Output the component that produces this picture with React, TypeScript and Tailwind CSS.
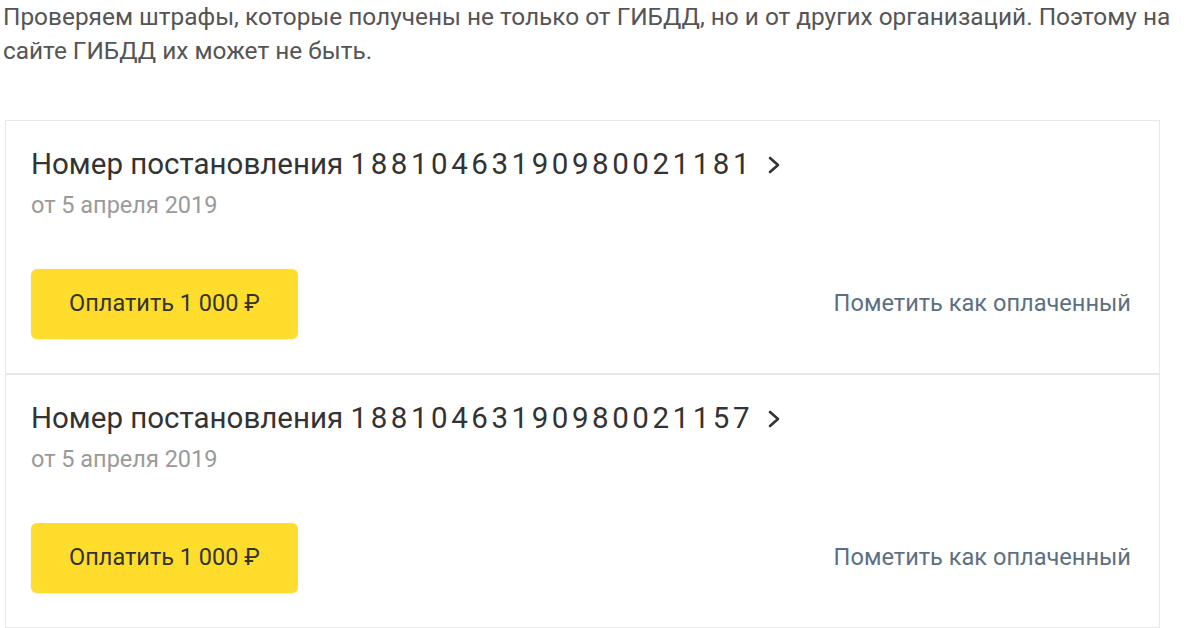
import React from "react";

function Chevron() {
  return (
    <svg width="16" height="20" viewBox="0 0 16 20" className="ml-[13px] mt-[2px]" fill="none">
      <polyline points="4,3 12,10 4,17" stroke="#333" strokeWidth="2.6" strokeLinecap="round" strokeLinejoin="round" />
    </svg>
  );
}

function Fine({ num, last }: { num: string; last?: boolean }) {
  return (
    <div className={`pl-[25px] pr-[28px] pt-[23px] pb-[34px] ${last ? "" : "border-b-2 border-[#e6e6e6]"}`}>
      <div className="flex items-center h-[40px] text-[29.5px] text-[#333] leading-[40px]">
        <span>
          Номер постановления <span className="tracking-[3.55px]">{num}</span>
        </span>
        <Chevron />
      </div>
      <div className="mt-[7px] text-[23.5px] leading-[28px] text-[#9a9a9a]">от 5 апреля 2019</div>
      <div className="mt-[50px] flex items-center justify-between">
        <button className="w-[267px] h-[70px] rounded-[6px] bg-[#ffdd2d] text-[23.5px] text-[#333] shadow-[0_1px_2px_rgba(0,0,0,0.08)]">
          Оплатить 1 000 ₽
        </button>
        <span className="text-[23.6px] text-[#5d6f82]">Пометить как оплаченный</span>
      </div>
    </div>
  );
}

export default function App() {
  return (
    <div className="w-[1200px] h-[628px] bg-white overflow-hidden" style={{ fontFamily: "Roboto, 'Liberation Sans', sans-serif" }}>
      <p className="pl-[3px] text-[24.4px] leading-[34px] text-[#555] whitespace-nowrap">
        Проверяем штрафы, которые получены не только от ГИБДД, но и от других организаций. Поэтому на
        <br />
        сайте ГИБДД их может не быть.
      </p>
      <div className="ml-[5px] mt-[52px] w-[1155px] border border-[#e8e8e8] border-b-2">
        <Fine num="18810463190980021181" />
        <Fine num="18810463190980021157" last />
      </div>
    </div>
  );
}
